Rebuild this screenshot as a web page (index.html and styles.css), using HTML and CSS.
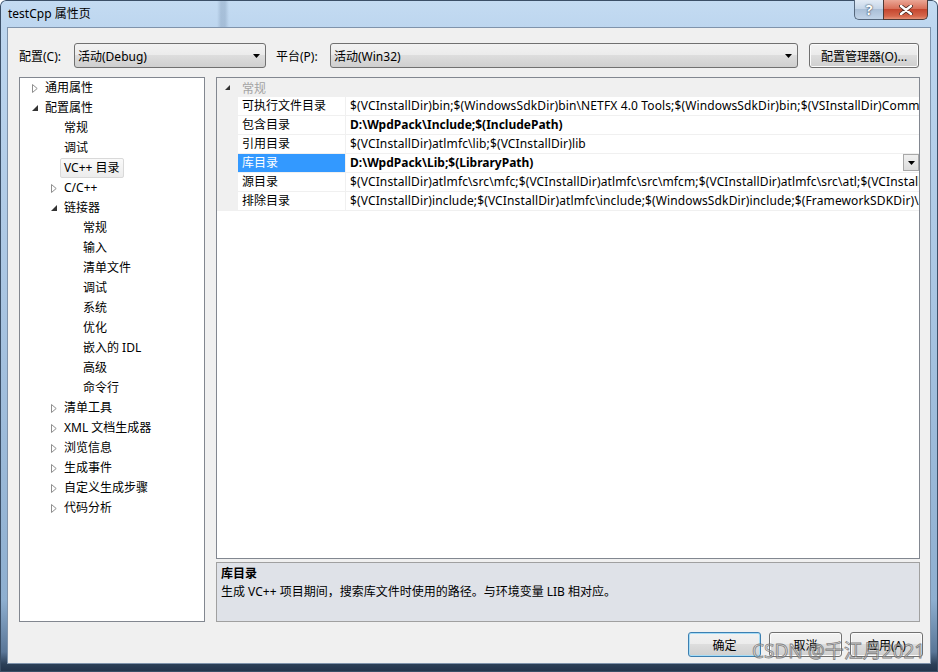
FILE: index.html
```html
<!DOCTYPE html>
<html lang="zh-CN">
<head>
<meta charset="utf-8">
<title>testCpp 属性页</title>
<link rel="stylesheet" href="styles.css">
</head>
<body>
<div class="window">
  <div class="titlebar">
    <span class="title">testCpp 属性页</span>
    <div class="caption">
      <span class="cbtn help">?</span>
      <span class="cbtn close"><svg width="14" height="10" viewBox="0 0 14 10"><path d="M2 1 L12 9 M12 1 L2 9" stroke="#4a2a22" stroke-width="4" stroke-linecap="round"/><path d="M2 1 L12 9 M12 1 L2 9" stroke="#ffffff" stroke-width="2.4" stroke-linecap="round"/></svg></span>
    </div>
  </div>
  <div class="client">
    <div class="toprow">
      <span class="lbl lbl1">配置(C):</span>
      <div class="combo combo1"><span>活动(Debug)</span><svg class="arrow" width="7" height="4" viewBox="0 0 7 4"><path d="M0 0 H7 L3.5 4 Z" fill="#000"/></svg></div>
      <span class="lbl lbl2">平台(P):</span>
      <div class="combo combo2"><span>活动(Win32)</span><svg class="arrow" width="7" height="4" viewBox="0 0 7 4"><path d="M0 0 H7 L3.5 4 Z" fill="#000"/></svg></div>
      <div class="btn mgr">配置管理器(O)...</div>
    </div>
    <div class="main">
      <div class="tree">
        <div class="ti l0"><span class="exp"><svg width="6" height="9" viewBox="0 0 6 9"><path d="M0.5 0.5 L5.2 4.5 L0.5 8.5 Z" fill="#fff" stroke="#8e8e8e"/></svg></span><span class="txt">通用属性</span></div>
        <div class="ti l0"><span class="exp"><svg width="6" height="6" viewBox="0 0 6 6"><path d="M6 0 L6 6 L0 6 Z" fill="#333"/></svg></span><span class="txt">配置属性</span></div>
        <div class="ti l1"><span class="exp"></span><span class="txt">常规</span></div>
        <div class="ti l1"><span class="exp"></span><span class="txt">调试</span></div>
        <div class="ti l1"><span class="exp"></span><span class="txt sel">VC++ 目录</span></div>
        <div class="ti l1"><span class="exp"><svg width="6" height="9" viewBox="0 0 6 9"><path d="M0.5 0.5 L5.2 4.5 L0.5 8.5 Z" fill="#fff" stroke="#8e8e8e"/></svg></span><span class="txt">C/C++</span></div>
        <div class="ti l1"><span class="exp"><svg width="6" height="6" viewBox="0 0 6 6"><path d="M6 0 L6 6 L0 6 Z" fill="#333"/></svg></span><span class="txt">链接器</span></div>
        <div class="ti l2"><span class="exp"></span><span class="txt">常规</span></div>
        <div class="ti l2"><span class="exp"></span><span class="txt">输入</span></div>
        <div class="ti l2"><span class="exp"></span><span class="txt">清单文件</span></div>
        <div class="ti l2"><span class="exp"></span><span class="txt">调试</span></div>
        <div class="ti l2"><span class="exp"></span><span class="txt">系统</span></div>
        <div class="ti l2"><span class="exp"></span><span class="txt">优化</span></div>
        <div class="ti l2"><span class="exp"></span><span class="txt">嵌入的 IDL</span></div>
        <div class="ti l2"><span class="exp"></span><span class="txt">高级</span></div>
        <div class="ti l2"><span class="exp"></span><span class="txt">命令行</span></div>
        <div class="ti l1"><span class="exp"><svg width="6" height="9" viewBox="0 0 6 9"><path d="M0.5 0.5 L5.2 4.5 L0.5 8.5 Z" fill="#fff" stroke="#8e8e8e"/></svg></span><span class="txt">清单工具</span></div>
        <div class="ti l1"><span class="exp"><svg width="6" height="9" viewBox="0 0 6 9"><path d="M0.5 0.5 L5.2 4.5 L0.5 8.5 Z" fill="#fff" stroke="#8e8e8e"/></svg></span><span class="txt">XML 文档生成器</span></div>
        <div class="ti l1"><span class="exp"><svg width="6" height="9" viewBox="0 0 6 9"><path d="M0.5 0.5 L5.2 4.5 L0.5 8.5 Z" fill="#fff" stroke="#8e8e8e"/></svg></span><span class="txt">浏览信息</span></div>
        <div class="ti l1"><span class="exp"><svg width="6" height="9" viewBox="0 0 6 9"><path d="M0.5 0.5 L5.2 4.5 L0.5 8.5 Z" fill="#fff" stroke="#8e8e8e"/></svg></span><span class="txt">生成事件</span></div>
        <div class="ti l1"><span class="exp"><svg width="6" height="9" viewBox="0 0 6 9"><path d="M0.5 0.5 L5.2 4.5 L0.5 8.5 Z" fill="#fff" stroke="#8e8e8e"/></svg></span><span class="txt">自定义生成步骤</span></div>
        <div class="ti l1"><span class="exp"><svg width="6" height="9" viewBox="0 0 6 9"><path d="M0.5 0.5 L5.2 4.5 L0.5 8.5 Z" fill="#fff" stroke="#8e8e8e"/></svg></span><span class="txt">代码分析</span></div>
      </div>
      <div class="right">
        <div class="grid">
          <div class="ghead"><span class="gexp"><svg width="5" height="5" viewBox="0 0 5 5"><path d="M5 0 L5 5 L0 5 Z" fill="#333"/></svg></span><span>常规</span></div>
          <div class="grow"><span class="gut"></span><span class="gname">可执行文件目录</span><span class="gval"><span class="vt">$(VCInstallDir)bin;$(WindowsSdkDir)bin\NETFX 4.0 Tools;$(WindowsSdkDir)bin;$(VSInstallDir)Common7\Tools\bin;$(VSInstallDir)Common7\tools;$(VSInstallDir)Common7\ide</span></span></div>
          <div class="grow"><span class="gut"></span><span class="gname">包含目录</span><span class="gval"><span class="vt b">D:\WpdPack\Include;$(IncludePath)</span></span></div>
          <div class="grow"><span class="gut"></span><span class="gname">引用目录</span><span class="gval"><span class="vt">$(VCInstallDir)atlmfc\lib;$(VCInstallDir)lib</span></span></div>
          <div class="grow"><span class="gut"></span><span class="gname sel">库目录</span><span class="gval"><span class="vt b">D:\WpdPack\Lib;$(LibraryPath)</span><span class="dd"><svg width="7" height="4" viewBox="0 0 7 4"><path d="M0 0 H7 L3.5 4 Z" fill="#000"/></svg></span></span></div>
          <div class="grow"><span class="gut"></span><span class="gname">源目录</span><span class="gval"><span class="vt">$(VCInstallDir)atlmfc\src\mfc;$(VCInstallDir)atlmfc\src\mfcm;$(VCInstallDir)atlmfc\src\atl;$(VCInstallDir)crt\src;</span></span></div>
          <div class="grow"><span class="gut"></span><span class="gname">排除目录</span><span class="gval"><span class="vt">$(VCInstallDir)include;$(VCInstallDir)atlmfc\include;$(WindowsSdkDir)include;$(FrameworkSDKDir)\include;$(MSBuildToolsPath32);$(VCInstallDir)atlmfc\lib;$(VCInstallDir)lib</span></span></div>
        </div>
        <div class="desc">
          <div class="dtitle">库目录</div>
          <div>生成 VC++ 项目期间，搜索库文件时使用的路径。与环境变量 LIB 相对应。</div>
        </div>
      </div>
    </div>
    <div class="buttons">
      <div class="btn def">确定</div>
      <div class="btn">取消</div>
      <div class="btn">应用(A)</div>
    </div>
  </div>
  <div class="watermark">CSDN @千江月2021</div>
</div>
</body>
</html>
```
FILE: styles.css
```css
* { box-sizing: border-box; }

body {
  margin: 0;
  font-family: "Noto Sans", "Noto Sans CJK SC", sans-serif;
  font-size: 12px;
  color: #000;
}

.window {
  position: relative;
  width: 938px;
  height: 672px;
  display: flex;
  flex-direction: column;
  overflow: hidden;
  border-radius: 6px 6px 0 0;
  background:
    linear-gradient(to right, transparent 217px, rgba(100, 125, 155, 0.28) 221px, rgba(100, 125, 155, 0.28) 225px, transparent 229px) 0 0 / 100% 28px no-repeat,
    linear-gradient(to bottom, #c4dbf2 0px, #bdd6ef 28px, #a9c5e2 300px, #8eafd0 600px, #5a7697 652px, #2c4058 664px, #22334a 672px);
  box-shadow: inset 0 0 0 1px #3b4f67;
}

.titlebar {
  height: 27px;
  display: flex;
  align-items: flex-start;
  padding-left: 8px;
}

.title {
  line-height: 28px;
  font-size: 12px;
}

.caption {
  margin-left: auto;
  margin-right: 10px;
  display: flex;
}

.cbtn {
  height: 20px;
  display: flex;
  align-items: center;
  justify-content: center;
}

.cbtn.help {
  width: 29px;
  border: 1px solid #55677c;
  border-top: none;
  border-right: none;
  border-radius: 0 0 0 5px;
  background: linear-gradient(#e2ebf5, #c6d6e8 45%, #aabfd7 50%, #c2d4e8);
  color: #fff;
  font-weight: bold;
  font-size: 14px;
  text-shadow: 0 0 2px #34465c, 0 0 1px #34465c;
}

.cbtn.close {
  width: 45px;
  border: 1px solid #4f3a36;
  border-top: none;
  border-radius: 0 0 5px 0;
  background: linear-gradient(#eba796, #d9705a 45%, #c5472f 50%, #d5664b 85%, #e69378);
}

.client {
  flex: 1;
  min-height: 0;
  margin: 0 7px 8px 7px;
  background: #f0f0f0;
  border: 1px solid #7f93ab;
  padding: 15px 10px 0 11px;
  display: flex;
  flex-direction: column;
}

.toprow {
  display: flex;
  height: 25px;
  align-items: center;
}

.lbl { white-space: nowrap; flex: 0 0 auto; }
.lbl1 { width: 55px; }
.lbl2 { width: 54px; margin-left: 10px; }

.combo {
  flex: 0 0 auto;
  height: 25px;
  border: 1px solid #707070;
  border-radius: 3px;
  background: linear-gradient(#f2f2f2, #ebebeb 50%, #dddddd 50%, #cfcfcf);
  display: flex;
  align-items: center;
  padding-left: 3px;
}

.combo .arrow { margin-left: auto; margin-right: 5px; }
.combo1 { width: 192px; }
.combo2 { width: 468px; }

.btn {
  flex: 0 0 auto;
  width: 73px;
  height: 25px;
  border: 1px solid #707070;
  border-radius: 3px;
  background: linear-gradient(#f2f2f2, #ebebeb 50%, #dddddd 50%, #cfcfcf);
  box-shadow: inset 0 0 0 1px #fbfbfb;
  display: flex;
  align-items: center;
  justify-content: center;
  white-space: nowrap;
}

.btn.mgr { width: 110px; margin-left: 11px; }

.btn.def {
  border-color: #3c7fb1;
  box-shadow: inset 0 0 0 1px #a6dcf6;
}

.main {
  display: flex;
  gap: 11px;
  height: 545px;
  margin-top: 9px;
}

.tree {
  flex: 0 0 186px;
  background: #fff;
  border: 1px solid #828790;
}

.ti {
  height: 20px;
  display: flex;
  align-items: center;
  white-space: nowrap;
}

.ti.l0 { padding-left: 12px; }
.ti.l1 { padding-left: 31px; }
.ti.l2 { padding-left: 50px; }

.exp {
  width: 13px;
  height: 20px;
  display: flex;
  align-items: center;
}

.txt {
  height: 20px;
  line-height: 18px;
  padding: 0 3px;
  margin-left: -4px;
  border: 1px solid transparent;
  border-radius: 2px;
}

.txt.sel {
  border-color: #d9d9d9;
  background: linear-gradient(#fafafa, #ececec);
}

.right {
  flex: 1;
  min-width: 0;
  display: flex;
  flex-direction: column;
  gap: 3px;
}

.grid {
  flex: 1;
  min-width: 0;
  background: #fff;
  border: 1px solid #828790;
  overflow: hidden;
}

.ghead {
  height: 19px;
  background: #f0f0f0;
  display: flex;
  align-items: center;
  color: #a3a3a3;
}

.gexp {
  width: 25px;
  padding-left: 8px;
  display: flex;
  align-items: center;
}

.grow {
  display: flex;
  height: 19px;
}

.gut {
  flex: 0 0 21px;
  background: #f0f0f0;
}

.gname {
  flex: 0 0 108px;
  border-bottom: 1px solid #f0f0f0;
  border-right: 1px solid #f0f0f0;
  padding-left: 4px;
  line-height: 18px;
  white-space: nowrap;
}

.gname.sel {
  background: #3399ff;
  color: #fff;
}

.gval {
  flex: 1;
  min-width: 0;
  border-bottom: 1px solid #f0f0f0;
  padding-left: 4px;
  line-height: 18px;
  white-space: nowrap;
  overflow: hidden;
  display: flex;
}

.vt { flex: 0 0 auto; letter-spacing: 0.13px; }
.vt.b { font-weight: bold; letter-spacing: 0; }

.dd {
  margin-left: auto;
  flex: 0 0 16px;
  height: 17px;
  border: 1px solid #a8a8a8;
  background: linear-gradient(#f0f0f0, #dcdcdc);
  display: flex;
  align-items: center;
  justify-content: center;
}

.desc {
  flex: 0 0 60px;
  border: 1px solid #a0a0a0;
  background: #dfe2e8;
  padding: 2px 4px;
  line-height: 18px;
}

.dtitle { font-weight: bold; }

.buttons {
  display: flex;
  justify-content: flex-end;
  gap: 8px;
  margin-top: 10px;
  margin-right: -3px;
}

.watermark {
  position: absolute;
  left: 752px;
  top: 639px;
  font-size: 19px;
  line-height: 24px;
  color: rgba(235, 235, 235, 0.4);
  -webkit-text-stroke: 0.8px rgba(100, 100, 100, 0.8);
  white-space: nowrap;
}
```
